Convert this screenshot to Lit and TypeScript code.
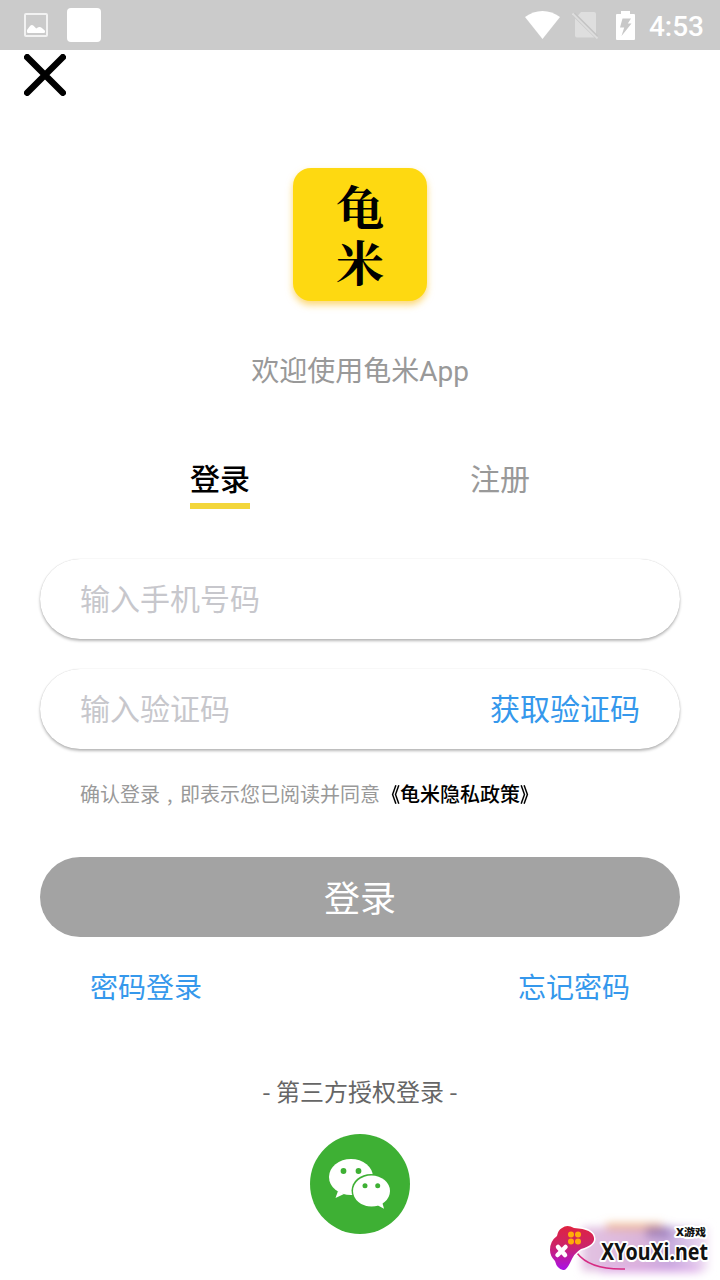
import { LitElement, html, css } from "lit";
import { customElement, state } from "lit/decorators.js";

@customElement("status-bar")
class StatusBar extends LitElement {
  static styles = css`
    :host { display: flex; align-items: center; height: 50px; box-sizing: border-box; padding: 0 16px 0 24px; background: #cbcbcb; color: #fff; }
    svg { display: block; flex: none; }
    .picture { margin-right: 19px; }
    .square { width: 34px; height: 34px; border-radius: 4px; background: #fff; }
    .grow { flex: 1; }
    .sim { margin-left: 12px; }
    .battery { margin-left: 17px; }
    .time { margin-left: 14px; padding-top: 3px; height: 50px; box-sizing: border-box; font: 500 28px/47px Roboto, sans-serif; }
  `;
  render() {
    return html`
      <svg class="picture" width="24" height="24" viewBox="0 0 24 24">
        <rect x="1" y="1" width="22" height="22" rx="1" fill="none" stroke="#f2f2f2" stroke-width="2" />
        <path d="M3 19v-2l3.200-4.200q1.700-1.800 3.400 0l2.600 2.700 2-1.200q2-1 3.700.8L21 17.700V19q0 1-1.200 1H4.200Q3 20 3 19Z" fill="#fff" />
      </svg>
      <div class="square"></div>
      <div class="grow"></div>
      <svg width="35" height="28" viewBox="0 0 35 28"><path d="M0 6Q8 0 17.500 0T35 6L17.500 28Z" fill="#fff" /></svg>
      <svg class="sim" width="27" height="27" viewBox="0 0 27 27">
        <path d="M9 0h13q2 0 2 2v21L5.500 4Z" fill="#dedede" />
        <path d="M3 6.500L22.500 25.500H5q-2 0-2-2Z" fill="#dedede" />
        <path d="M0.500 1.500l25 25" stroke="#dedede" stroke-width="1.800" />
        <path d="M2.500 1l23 23" stroke="#c4c4c4" stroke-width="1.500" />
      </svg>
      <svg class="battery" width="19" height="29" viewBox="0 0 19 29">
        <path d="M5 0h9v3h4q1 0 1 1v24q0 1-1 1H1q-1 0-1-1V4q0-1 1-1h4Z" fill="#fff" />
        <path d="M6.500 7.500H15l-3.200 5H15.500L5.500 25l2.700-8.500H4Z" fill="#c8c8c8" />
      </svg>
      <div class="time">4:53</div>
    `;
  }
}

@customElement("site-mark")
class SiteMark extends LitElement {
  static styles = css`
    :host { display: block; width: 180px; height: 70px; }
    svg { display: block; }
    .name { font: 700 24px "Noto Sans", "Open Sans", sans-serif; }
    .small { font: 900 10.500px "Noto Sans", "Noto Sans CJK SC", sans-serif; }
    .outline { fill: #111; stroke: #fff; stroke-width: 4px; stroke-linejoin: round; paint-order: stroke; }
  `;
  render() {
    return html`
      <svg width="180" height="70" viewBox="0 0 180 70">
        <defs>
          <linearGradient id="pad" x1="0" y1="0" x2="0" y2="1">
            <stop offset="0" stop-color="#df2340" /><stop offset=".45" stop-color="#cc2468" /><stop offset="1" stop-color="#a911e8" />
          </linearGradient>
          <linearGradient id="haze" x1="0" y1="0" x2="1" y2="0">
            <stop offset="0" stop-color="#dcb4dc" /><stop offset=".45" stop-color="#d2a3d0" /><stop offset=".7" stop-color="#b796d4" /><stop offset="1" stop-color="#f0daf2" />
          </linearGradient>
          <filter id="soft" x="-20%" y="-30%" width="140%" height="160%"><feGaussianBlur stdDeviation="4" /></filter>
        </defs>
        <g filter="url(#soft)">
          <rect x="42" y="17" width="126" height="44" fill="url(#haze)" opacity=".8" />
          <rect x="66" y="13" width="56" height="7" fill="#eba66f" opacity=".7" />
          <rect x="106" y="16" width="24" height="12" fill="#76569f" opacity=".45" />
          <rect x="60" y="55" width="100" height="8" fill="#d996e7" opacity=".5" />
        </g>
        <path d="M37 43Q50 60 85 59" fill="none" stroke="#d62b83" stroke-width="1.500" />
        <path d="M22 18Q27 14 34 18Q53 19 54 28Q55 35 41 39Q34 43 30 53Q26 61 23 60Q17 59 15 51Q10 46 10 40Q10 31 17 26Q18 20 22 18Z"
          fill="url(#pad)" stroke="#fff" stroke-width="3" paint-order="stroke" />
        <g fill="#ffad09"><circle cx="31" cy="24.500" r="3" /><circle cx="38" cy="24.500" r="3" /><circle cx="31" cy="31.500" r="3" /><circle cx="38" cy="31.500" r="3" /></g>
        <path d="M18 37l7 8M25.500 37l-8 8" stroke="#fff" stroke-width="4.500" stroke-linecap="round" />
        <text class="name outline" x="61" y="50" textLength="107" lengthAdjust="spacingAndGlyphs">XYouXi.net</text>
        <text class="small outline" x="136" y="26" textLength="30" lengthAdjust="spacingAndGlyphs">X游戏</text>
      </svg>
    `;
  }
}

@customElement("app-root")
class AppRoot extends LitElement {
  @state() private tab = 0;

  static styles = css`
    :host { display: block; position: relative; width: 720px; height: 1280px; overflow: hidden; background: #fff; font-family: "Noto Sans CJK SC", "Noto Sans", sans-serif; }
    svg { display: block; }
    .close { padding: 4px 0 0 24px; height: 118px; box-sizing: border-box; }
    .tile { width: 134px; height: 133px; margin: 0 auto; box-sizing: border-box; padding-top: 10px; border-radius: 18px; background: #fed911; box-shadow: 0 4px 7px rgba(250, 190, 30, .6); display: flex; flex-direction: column; align-items: center; font: 700 48px/55px "Noto Serif CJK SC", "Noto Serif SC", "Noto Sans CJK SC", serif; color: #000; }
    .tile span { display: block; height: 55px; }
    .welcome { margin-top: 48px; height: 40px; line-height: 40px; font-size: 28px; color: #999; text-align: center; }
    .welcome span { font-family: Roboto, sans-serif; }
    .tabs { display: grid; grid-template-columns: 280px 280px; justify-content: center; margin-top: 64px; height: 56px; }
    .tab { display: flex; flex-direction: column; align-items: center; font-size: 30px; line-height: 48px; color: #999; cursor: pointer; }
    .tab.active { color: #000; font-weight: 500; }
    .tab.active::after { content: ""; width: 60px; height: 6px; margin-top: 2px; background: #f3d63b; }
    .form { margin: 50px 40px 0; display: grid; gap: 30px; }
    .field { height: 80px; box-sizing: border-box; padding: 0 40px 4px; border-radius: 40px; background: #fff; display: flex; justify-content: space-between; align-items: center; font-size: 30px; line-height: 40px; color: #c7c7cc; box-shadow: 0 2px 3px rgba(0, 0, 0, .28), 0 0 1px rgba(0, 0, 0, .2); }
    .code { color: #3598ec; }
    .terms { display: flex; margin: 30px 0 0 80px; height: 30px; line-height: 30px; font-size: 20px; color: #999; white-space: nowrap; }
    .comma { width: 20px; box-sizing: border-box; padding-left: 7px; }
    .policy { display: flex; color: #000; font-weight: 500; }
    .bracket { width: 20px; font-weight: 700; transform: scaleX(.85); transform-origin: left; }
    .bracket.open { transform-origin: right; }
    .submit { margin: 48px 40px 0; height: 80px; line-height: 78px; border-radius: 40px; background: #a3a3a3; color: #fff; font-size: 36px; text-align: center; }
    .links { display: flex; justify-content: space-between; margin: 29px 90px 0; height: 40px; line-height: 40px; font-size: 28px; color: #3598ec; }
    .third { margin-top: 65px; height: 40px; line-height: 40px; font-size: 24px; color: #666; text-align: center; }
    .wechat { margin: 23px auto 0; }
    .mark { position: absolute; right: 0; bottom: 0; }
  `;

  render() {
    return html`
      <status-bar></status-bar>
      <div class="close">
        <svg width="42" height="42" viewBox="0 0 42 42"><path d="M3.200 3.200l35.600 35.600M38.800 3.200L3.200 38.800" stroke="#000" stroke-width="6.400" stroke-linecap="round" /></svg>
      </div>
      <div class="tile"><span>龟</span><span>米</span></div>
      <div class="welcome">欢迎使用龟米<span>App</span></div>
      <div class="tabs">
        ${["登录", "注册"].map((label, i) => html`
          <div class="tab ${this.tab === i ? "active" : ""}" @click=${() => (this.tab = i)}>${label}</div>`)}
      </div>
      <div class="form">
        <div class="field"><span>输入手机号码</span></div>
        <div class="field"><span>输入验证码</span><span class="code">获取验证码</span></div>
      </div>
      <div class="terms">确认登录<span class="comma">,</span>即表示您已阅读并同意<span class="policy"><span class="bracket open">《</span>龟米隐私政策<span class="bracket">》</span></span></div>
      <div class="submit">登录</div>
      <div class="links"><span>密码登录</span><span>忘记密码</span></div>
      <div class="third">- 第三方授权登录 -</div>
      <svg class="wechat" width="100" height="100" viewBox="0 0 100 100">
        <circle cx="50" cy="50" r="50" fill="#3eb034" />
        <path d="M28 57l-2.500 7 8.500-4Z" fill="#fff" />
        <ellipse cx="41" cy="43" rx="22" ry="18" fill="#fff" />
        <ellipse cx="61" cy="56.500" rx="19.500" ry="16.500" fill="#3eb034" />
        <ellipse cx="61.500" cy="57" rx="18.500" ry="15.500" fill="#fff" />
        <path d="M67 71l7 3.800-2-7.300Z" fill="#fff" />
        <g fill="#3eb034"><circle cx="33.500" cy="37" r="2.900" /><circle cx="48.500" cy="37" r="2.900" /><circle cx="55" cy="51.700" r="2.500" /><circle cx="67.700" cy="51.700" r="2.500" /></g>
      </svg>
      <site-mark class="mark"></site-mark>
    `;
  }
}
